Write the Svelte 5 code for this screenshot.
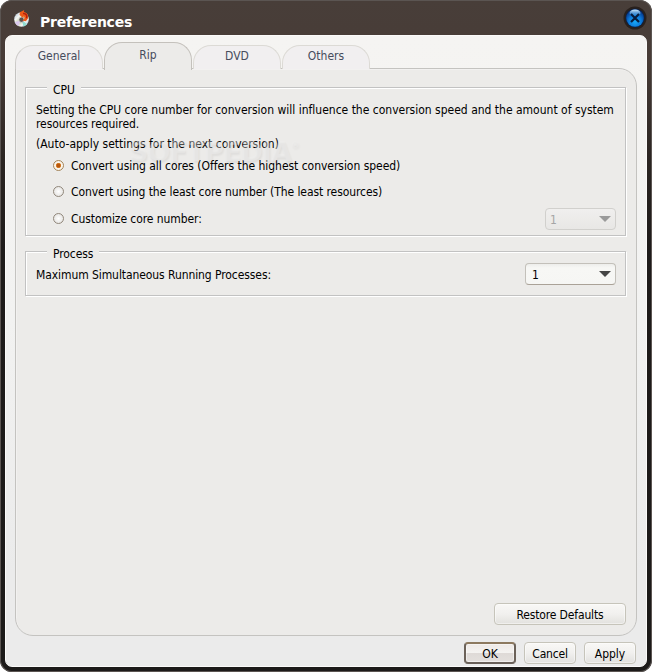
<script>
  let tabs = ['General', 'Rip', 'DVD', 'Others'];
  let active = $state('Rip');
  let mode = $state(0);
  const modes = [
    { label: 'Convert using all cores (Offers the highest conversion speed)', cls: 'm1' },
    { label: 'Convert using the least core number (The least resources)', cls: 'm2' },
    { label: 'Customize core number:', cls: 'm3' }
  ];
</script>

<div class="window">
  <header>
    <svg class="logo" width="18" height="18" viewBox="0 0 18 18">
      <defs>
        <linearGradient id="disc" x1="0" y1="0" x2="1" y2="1">
          <stop offset="0" stop-color="#9eb6c8" /><stop offset=".3" stop-color="#f4f6f5" />
          <stop offset=".5" stop-color="#c4d3a0" /><stop offset=".7" stop-color="#f2f5f4" />
          <stop offset="1" stop-color="#8fb4d4" />
        </linearGradient>
      </defs>
      <circle cx="8.5" cy="9.5" r="7.3" fill="url(#disc)" />
      <path d="M8.5 9.5L1.6 12.2A7.3 7.3 0 0 0 5.5 16z" fill="#d9c8ec" />
      <path d="M8.5 9.5L14 14.3A7.3 7.3 0 0 1 10.5 16.4z" fill="#8fdcd0" />
      <circle cx="8.5" cy="9.700" r="2.600" fill="#5a5350" stroke="#ddd" stroke-width=".7" />
      <path d="M7 2.300l4.200-2.300-.3 2C15.500 2.800 16.800 8.300 12.700 11.300L9.400 10.600C12 9 12 7 10.500 6.300l-.2 2L6.500 5z" fill="#ee5a18" />
      <path d="M10 3.500c3-.3 4.500 2 3.500 4.700" fill="none" stroke="#b6200d" stroke-width="1.500" />
    </svg>
    <h1>Preferences</h1>
    <button class="close" aria-label="Close">
      <svg width="24" height="24" viewBox="0 0 24 24">
        <defs>
          <radialGradient id="orb" cx=".5" cy=".7" r=".65">
            <stop offset="0" stop-color="#18aaf8" /><stop offset=".55" stop-color="#0b78d8" />
            <stop offset="1" stop-color="#063486" />
          </radialGradient>
          <linearGradient id="shine" x1="0" y1="0" x2="0" y2="1">
            <stop offset="0" stop-color="#d7f2ff" /><stop offset="1" stop-color="#48a4e8" stop-opacity=".2" />
          </linearGradient>
        </defs>
        <circle cx="12" cy="12" r="11.500" fill="#29211d" />
        <circle cx="12" cy="12" r="9.600" fill="#0a2148" />
        <circle cx="12" cy="12" r="8.800" fill="url(#orb)" />
        <ellipse cx="12" cy="7" rx="5.500" ry="3.500" fill="url(#shine)" />
        <path d="M8 8l8 8M16 8l-8 8" stroke="#071c3c" stroke-width="2.200" />
      </svg>
    </button>
  </header>

  <main>
    <nav>
      {#each tabs as t}
        <button class="tab" class:active={t === active} onclick={() => (active = t)}><span>{t}</span></button>
      {/each}
    </nav>

    <section class="panel">
      <div class="group cpu">
        <div class="legend lcpu">CPU</div>
        <p class="intro"><span class="l1">Setting the CPU core number for conversion will influence the conversion speed and the amount of system</span><br /><span class="l2">resources required.</span></p>
        <p class="note">(Auto-apply settings for the next conversion)</p>
        <div class="watermark">SOFTPEDIA<sup>®</sup></div>
        {#each modes as m, i}
          <div class="row">
            <button class="radio" class:on={mode === i} aria-label={m.label} onclick={() => (mode = i)}></button>
            <span class={m.cls}>{m.label}</span>
            {#if i === 2}
              <div class="combo off"><span>1</span><svg width="12" height="6" viewBox="0 0 12 6"><path d="M0 0h12L6 6z" /></svg></div>
            {/if}
          </div>
        {/each}
      </div>

      <div class="group process">
        <div class="legend lproc">Process</div>
        <div class="prow">
          <span class="max">Maximum Simultaneous Running Processes:</span>
          <div class="combo"><span>1</span><svg width="12" height="6" viewBox="0 0 12 6"><path d="M0 0h12L6 6z" /></svg></div>
        </div>
      </div>

      <button class="btn restore"><span>Restore Defaults</span></button>
    </section>

    <footer>
      <button class="btn ok"><span>OK</span></button>
      <button class="btn cancel"><span>Cancel</span></button>
      <button class="btn apply"><span>Apply</span></button>
    </footer>
  </main>
</div>

<style>
  :global(body) { background: #fff; }
  * { box-sizing: border-box; }
  .window, button { font: 12px/14px "DejaVu Sans Condensed", "DejaVu Sans", sans-serif; color: #000; }
  .window { width: 652px; height: 672px; padding: 0 5px 5px 5px; display: flex; flex-direction: column; white-space: nowrap; border-radius: 12px; overflow: hidden;
    background: linear-gradient(#483e39 0, #483c37 60px, #2b2522 160px, #1e1b1a 250px, #1c1a19); box-shadow: inset 0 0 0 1px #5b5552; }
  button { padding: 0; border: 0; background: none; }
  header { height: 35px; flex: none; display: flex; align-items: center; padding: 5px 0 0 9px; }
  .logo { margin-top: -2px; margin-left: -1px; }
  h1 { margin: 3px 0 0 9px; font: bold 14px/18px "DejaVu Sans", sans-serif; letter-spacing: -.25px; color: #fff; }
  .close { margin: -5px 0 0 auto; width: 24px; height: 24px; }
  main { flex: 1; display: flex; flex-direction: column; border-radius: 7px; border: 1px solid #fbfaf9; padding: 6px 9px 0; background: linear-gradient(#f5f4f2, #f2f2f1 45%, #ebebeb 85%, #ebebeb); }
  nav { display: flex; gap: 1px; height: 27px; align-items: flex-end; position: relative; z-index: 1; }
  .tab { width: 88px; height: 24px; border: 1px solid #dcdad5; border-bottom: 0; border-radius: 18px 18px 0 0; background: #f1eff0; color: #464c5c; padding-bottom: 3px; }
  .tab:first-child { border-left-color: #cdcbc8; }
  .tab.active { height: 28px; margin-bottom: -1px; border-color: #c4c1bc; background: #ecebe9; padding-bottom: 4px; }
  .panel { height: 568px; margin-top: -1px; border: 1px solid #c4c3c0; border-radius: 0 18px 18px 18px; background: #ecebe9; padding: 18px 10px 0 9px; display: flex; flex-direction: column; box-shadow: inset 1px 1px #f2f1f0; }
  .group { border: 1px solid #c2c2c2; box-shadow: 1px 1px #fff, inset 1px 1px #fff; padding-left: 10px; position: relative; }
  .cpu { height: 149px; }
  .process { height: 45px; margin-top: 15px; }
  .legend { position: absolute; left: 21px; top: -7px; padding: 3px 6px; background: #ecebe9; line-height: 12px; }
  .lproc { letter-spacing: -.08px; }
  p { margin: 0; }
  .intro { padding-top: 15px; }
  .l1 { letter-spacing: -.003px; }
  .l2 { letter-spacing: -.06px; }
  .note { padding-top: 6px; margin-bottom: 2px; }
  .m1 { letter-spacing: -.035px; }
  .m2 { letter-spacing: -.075px; }
  .m3, .max { letter-spacing: -.08px; }
  .watermark { position: absolute; left: 103px; top: 50px; font: bold 27px/28px "DejaVu Sans", sans-serif; letter-spacing: -1px; color: rgba(240, 240, 240, .38); text-shadow: 1px 2px 2px rgba(0, 0, 0, .055); }
  sup { font-size: 9px; vertical-align: 13px; line-height: 0; }
  .row { display: flex; height: 26px; align-items: center; padding: 0 9px 0 17px; gap: 7px; }
  .row:nth-last-child(1) { margin-top: 1px; }
  .radio { width: 11px; height: 11px; border: 1px solid #91877b; border-radius: 50%; background: radial-gradient(#fff, #dedcd9); flex: none; margin-top: -1px; }
  .radio.on { border-color: #a38459; background: radial-gradient(circle, #b9570b 0 1.500px, #d98330 2.300px, #fbf5ea 3px); }
  .combo { margin-left: auto; display: flex; align-items: center; justify-content: space-between; width: 91px; height: 22px; padding: 1px 4px 0 6px; border: 1px solid #c3c0ba; border-bottom-color: #aaa298; border-radius: 4px; background: linear-gradient(#ededeb, #f7f7f5 4px, #f6f6f4); }
  .combo path { fill: #454545; }
  .combo svg { margin-top: -2px; }
  .combo.off { width: 71px; color: #a5a5a5; border-color: #d1d0cd; background: linear-gradient(#f0efee, #e8e7e5); padding-left: 4px; }
  .combo.off path { fill: #9a9a9a; }
  .prow { display: flex; align-items: center; height: 22px; margin-top: 11px; padding-right: 9px; }
  .max { padding-top: 2px; }
  .btn { height: 22px; border: 1px solid #c6c4ba; border-radius: 4px; background: linear-gradient(#f9f8f6, #f1f0ee 50%, #e2e1de); box-shadow: inset 0 0 0 1px rgba(255, 255, 255, .45); }
  .btn span { position: relative; top: 1px; }
  .restore { width: 132px; margin: auto 0 10px auto; flex: none; letter-spacing: -.15px; }
  footer { display: flex; justify-content: flex-end; gap: 8px; padding: 6px 0 0; margin-right: 1px; }
  .ok, .cancel, .apply { width: 52px; }
  .cancel { letter-spacing: -.2px; }
  .ok { border: 2px solid #81715f; border-color: #8d795f #6c6259 #695f58; background: linear-gradient(#eee9e6, #f5f3f1 48%, #dfdad7 52%, #e4e0dd); }
</style>
